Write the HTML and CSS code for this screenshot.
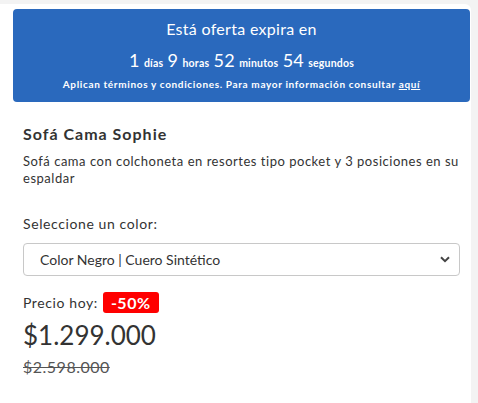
FILE: index.html
```html
<!DOCTYPE html>
<html lang="es">
<head>
<meta charset="utf-8">
<link rel="stylesheet" href="styles.css">
</head>
<body>
<div class="card">
  <div class="promo">
    <div class="promo-title">Está oferta expira en</div>
    <div class="countdown">
      <span class="num">1</span> <span class="unit">días</span>
      <span class="num">9</span> <span class="unit">horas</span>
      <span class="num">52</span> <span class="unit">minutos</span>
      <span class="num">54</span> <span class="unit">segundos</span>
    </div>
    <div class="terms">Aplican términos y condiciones. Para mayor información consultar <a href="#">aquí</a></div>
  </div>
  <div class="product">
    <h1 class="name">Sofá Cama Sophie</h1>
    <p class="desc">Sofá cama con colchoneta en resortes tipo pocket y 3 posiciones en su espaldar</p>
    <label class="label">Seleccione un color:</label>
    <div class="select">
      <span>Color Negro | Cuero Sintético</span>
      <svg class="chev" width="10" height="7" viewBox="0 0 10 7"><path d="M1 1.2 L5 5.2 L9 1.2" fill="none" stroke="#444" stroke-width="2"/></svg>
    </div>
    <div class="price-row">
      <span class="price-label">Precio hoy:</span>
      <span class="badge">-50%</span>
    </div>
    <div class="price">$1.299.000</div>
    <div class="old-price">$2.598.000</div>
  </div>
</div>
</body>
</html>
```

FILE: styles.css
```css
html, body {
  margin: 0;
  padding: 0;
  background: #f3f3f3;
  font-family: Lato, "Open Sans", sans-serif;
  color: #333;
  overflow: hidden;
}
.card {
  margin-top: 4px;
  width: 470px;
  padding: 5px 1px 0 0;
  background: #fff;
  border-top-right-radius: 6px;
  height: 394px;
}
.promo {
  margin-left: 13px;
  width: 457px;
  height: 93px;
  box-sizing: border-box;
  background: #2a69bd;
  border-radius: 4px;
  color: #fff;
  text-align: center;
  padding-top: 10px;
}
.promo-title {
  font-size: 16px;
  letter-spacing: 0.3px;
  line-height: 20px;
}
.countdown {
  margin-top: 10px;
  line-height: 22px;
  letter-spacing: 0.2px;
}
.countdown .num {
  font-size: 18px;
}
.countdown .unit {
  font-size: 10.5px;
  font-weight: bold;
}
.terms {
  margin-top: 3px;
  font-size: 10px;
  font-weight: bold;
  letter-spacing: 0.65px;
  line-height: 14px;
}
.terms a {
  color: #fff;
}
.product {
  padding: 0 8px 0 23px;
}
.name {
  margin: 21px 0 0;
  font-size: 16px;
  font-weight: bold;
  letter-spacing: 1px;
  line-height: 22px;
  color: #333;
}
.desc {
  margin: 8px 0 0;
  font-size: 13px;
  letter-spacing: 0.52px;
  line-height: 17px;
  color: #333;
}
.label {
  display: block;
  margin-top: 27px;
  font-size: 14px;
  letter-spacing: 0.6px;
  line-height: 20px;
}
.select {
  margin-top: 9px;
  width: 437px;
  height: 33px;
  box-sizing: border-box;
  border: 1px solid #c8c8c8;
  border-radius: 4px;
  display: flex;
  align-items: center;
  justify-content: space-between;
  padding: 0 9px 0 16px;
  font-size: 14px;
  color: #333;
}
.price-row {
  margin-top: 16px;
  display: flex;
  align-items: center;
  gap: 5px;
}
.price-label {
  font-size: 14px;
  letter-spacing: 0.6px;
}
.badge {
  background: #f00;
  color: #fff;
  font-weight: bold;
  font-size: 16px;
  letter-spacing: 0.5px;
  border-radius: 3px;
  padding: 0 8px;
  line-height: 21px;
}
.price {
  margin-top: 6px;
  font-size: 26px;
  letter-spacing: 0;
  line-height: 32px;
}
.old-price {
  margin-top: 6px;
  font-size: 16px;
  color: #555;
  text-decoration: line-through;
  letter-spacing: 0.5px;
  line-height: 20px;
}
```
